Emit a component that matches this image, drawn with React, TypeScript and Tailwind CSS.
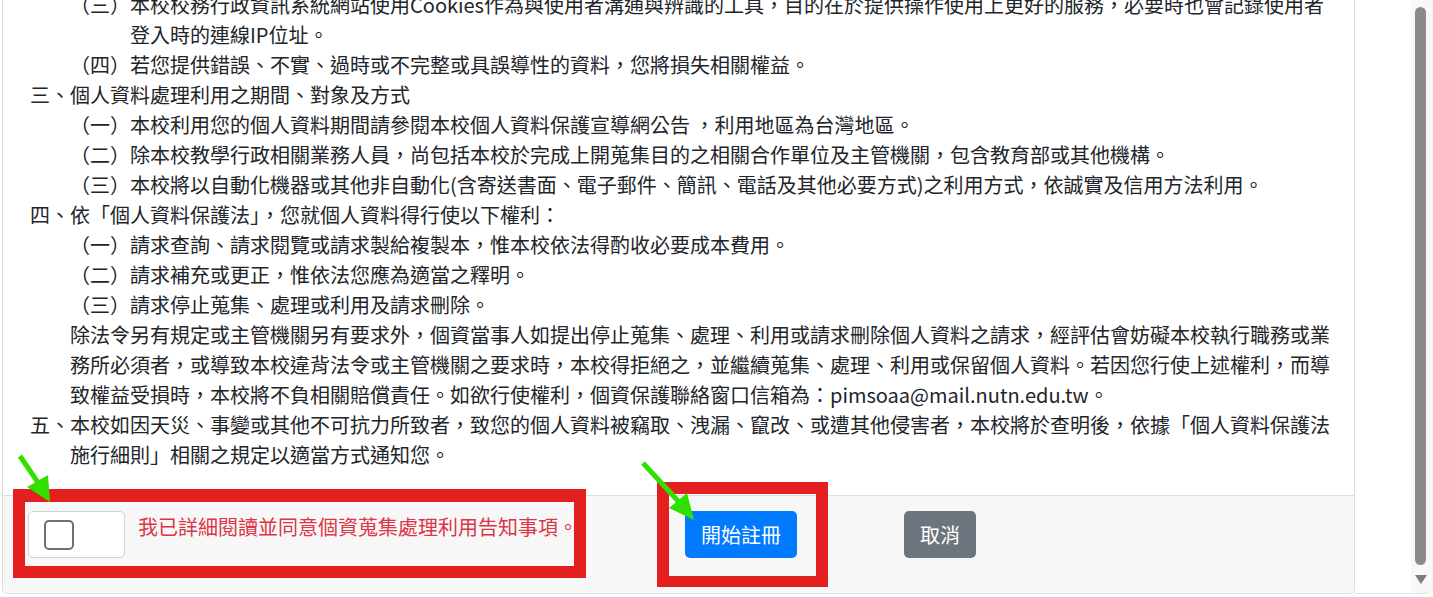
import React from "react";

type Line = { t: string; x: number };

const lines: Line[] = [
  { t: "（三）本校校務行政資訊系統網站使用Cookies作為與使用者溝通與辨識的工具，目的在於提供操作使用上更好的服務，必要時也會記錄使用者", x: 40 },
  { t: "登入時的連線IP位址。", x: 100 },
  { t: "（四）若您提供錯誤、不實、過時或不完整或具誤導性的資料，您將損失相關權益。", x: 40 },
  { t: "三、個人資料處理利用之期間、對象及方式", x: 0 },
  { t: "（一）本校利用您的個人資料期間請參閱本校個人資料保護宣導網公告 ，利用地區為台灣地區。", x: 40 },
  { t: "（二）除本校教學行政相關業務人員，尚包括本校於完成上開蒐集目的之相關合作單位及主管機關，包含教育部或其他機構。", x: 40 },
  { t: "（三）本校將以自動化機器或其他非自動化(含寄送書面、電子郵件、簡訊、電話及其他必要方式)之利用方式，依誠實及信用方法利用。", x: 40 },
  { t: "四、依「個人資料保護法」，您就個人資料得行使以下權利：", x: 0 },
  { t: "（一）請求查詢、請求閱覽或請求製給複製本，惟本校依法得酌收必要成本費用。", x: 40 },
  { t: "（二）請求補充或更正，惟依法您應為適當之釋明。", x: 40 },
  { t: "（三）請求停止蒐集、處理或利用及請求刪除。", x: 40 },
  { t: "除法令另有規定或主管機關另有要求外，個資當事人如提出停止蒐集、處理、利用或請求刪除個人資料之請求，經評估會妨礙本校執行職務或業", x: 40 },
  { t: "務所必須者，或導致本校違背法令或主管機關之要求時，本校得拒絕之，並繼續蒐集、處理、利用或保留個人資料。若因您行使上述權利，而導", x: 40 },
  { t: "致權益受損時，本校將不負相關賠償責任。如欲行使權利，個資保護聯絡窗口信箱為：pimsoaa@mail.nutn.edu.tw。", x: 40 },
  { t: "五、本校如因天災、事變或其他不可抗力所致者，致您的個人資料被竊取、洩漏、竄改、或遭其他侵害者，本校將於查明後，依據「個人資料保護法", x: 0 },
  { t: "施行細則」相關之規定以適當方式通知您。", x: 40 },
];

const indentClass: Record<number, string> = {
  0: "pl-0",
  40: "pl-[40px]",
  100: "pl-[100px]",
};

export default function App() {
  return (
    <div className="relative w-[1433px] h-[597px] overflow-hidden bg-white text-[#212529] font-['Noto_Sans_CJK_TC',sans-serif]">
      <div className="flex h-[594px]">
        {/* main page area */}
        <div className="flex w-[1411px] h-full">
          <div className="ml-[2px] w-[1353px] h-full flex flex-col border-x border-b border-[#dcdcdc] rounded-b-[5px] overflow-hidden">
            <div className="flex-1 overflow-hidden pl-[27px]">
              <div className="-mt-[10px] text-[20px] leading-[30px]">
                {lines.map((l, i) => (
                  <div key={i} className={`h-[30px] whitespace-nowrap ${indentClass[l.x]}`}>
                    {l.t}
                  </div>
                ))}
              </div>
            </div>
            <div className="h-[98px] shrink-0 border-t border-[#dfdfdf] bg-[#f7f7f7] flex items-start pt-[15px] pl-[25px]">
              <div className="w-[657px] flex items-start">
                <div className="w-[97px] h-[47px] bg-white border border-[#ced4da] rounded-[5px] flex items-center pl-[15px]">
                  <div className="w-[30px] h-[30px] bg-white border-2 border-[#707070] rounded-[5px]" />
                </div>
                <div className="ml-[13px] mt-[1px] text-[20px] leading-[30px] text-[#dc3545] whitespace-nowrap">
                  我已詳細閱讀並同意個資蒐集處理利用告知事項。
                </div>
              </div>
              <button className="h-[47px] px-[16px] rounded-[5px] bg-[#007bff] text-white text-[20px] leading-[30px] flex items-center">
                開始註冊
              </button>
              <button className="ml-[107px] h-[47px] px-[16px] rounded-[5px] bg-[#6c757d] text-white text-[20px] leading-[30px] flex items-center">
                取消
              </button>
            </div>
          </div>
          <div className="flex-1 h-full border-b border-[#e3e3e3]" />
        </div>
        {/* scrollbar */}
        <div className="w-[22px] h-full bg-[#f8f8f8] border-b border-[#e3e3e3] rounded-br-[8px] flex flex-col items-start pl-[4px] pt-[7px]">
          <div className="w-[11px] h-[558px] rounded-full bg-[#8a8a8a]" />
          <svg width="12" height="9" viewBox="0 0 12 9" className="mt-[10px]">
            <polygon points="0,0 12,0 6,9" fill="#7d7d7d" />
          </svg>
        </div>
      </div>

      {/* annotation overlays */}
      <div className="absolute left-[13px] top-[489px] w-[573px] h-[89px] border-[12px] border-t-[13px] border-[#e41f1f] pointer-events-none" />
      <div className="absolute left-[657px] top-[482px] w-[171px] h-[105px] border-[12px] border-b-[11px] border-[#e41f1f] pointer-events-none" />
      <svg className="absolute left-0 top-0 pointer-events-none" width="1433" height="597">
        <line x1="20" y1="456" x2="39" y2="484" stroke="#31e000" strokeWidth="5" />
        <polygon points="27,487 48,475 50,502" fill="#31e000" />
        <line x1="643" y1="463" x2="679" y2="502" stroke="#31e000" strokeWidth="5" />
        <polygon points="669,508 687,493 694,520" fill="#31e000" />
      </svg>
    </div>
  );
}
